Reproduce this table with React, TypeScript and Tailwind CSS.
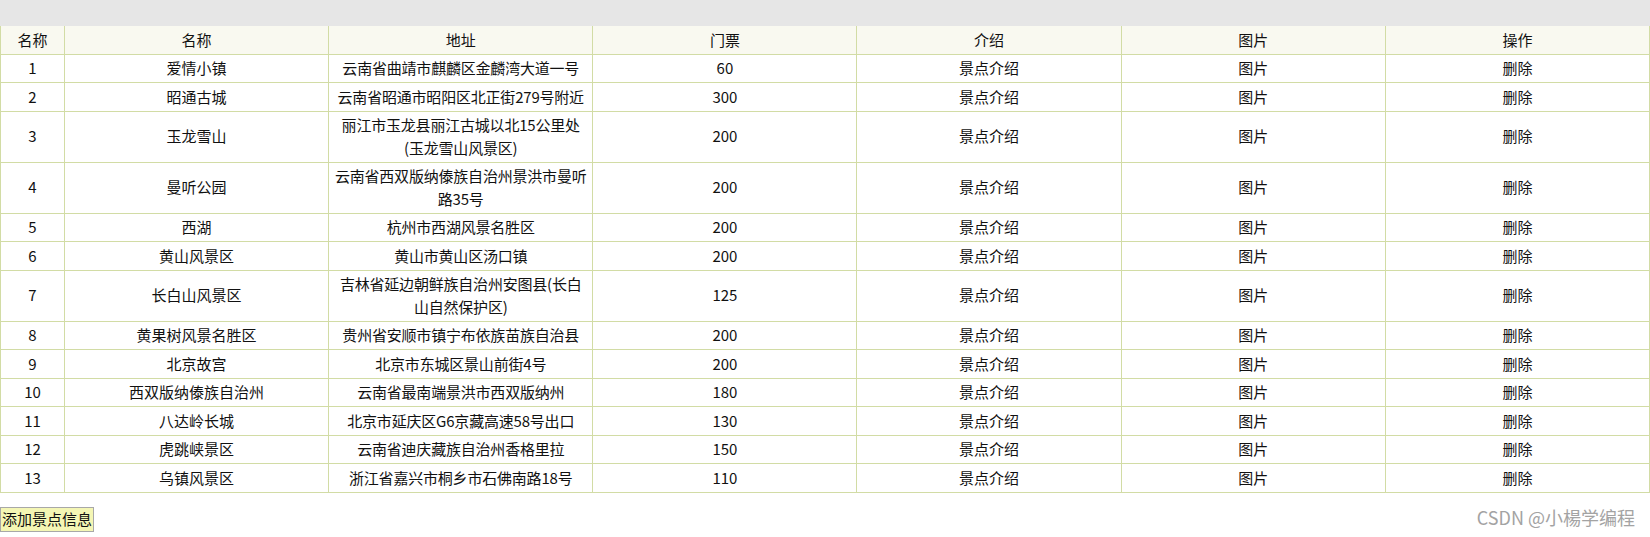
const rows: [string, string, string[], string][] = [
  ["1", "爱情小镇", ["云南省曲靖市麒麟区金麟湾大道一号"], "60"],
  ["2", "昭通古城", ["云南省昭通市昭阳区北正街279号附近"], "300"],
  ["3", "玉龙雪山", ["丽江市玉龙县丽江古城以北15公里处", "(玉龙雪山风景区)"], "200"],
  ["4", "曼听公园", ["云南省西双版纳傣族自治州景洪市曼听", "路35号"], "200"],
  ["5", "西湖", ["杭州市西湖风景名胜区"], "200"],
  ["6", "黄山风景区", ["黄山市黄山区汤口镇"], "200"],
  ["7", "长白山风景区", ["吉林省延边朝鲜族自治州安图县(长白", "山自然保护区)"], "125"],
  ["8", "黄果树风景名胜区", ["贵州省安顺市镇宁布依族苗族自治县"], "200"],
  ["9", "北京故宫", ["北京市东城区景山前街4号"], "200"],
  ["10", "西双版纳傣族自治州", ["云南省最南端景洪市西双版纳州"], "180"],
  ["11", "八达岭长城", ["北京市延庆区G6京藏高速58号出口"], "130"],
  ["12", "虎跳峡景区", ["云南省迪庆藏族自治州香格里拉"], "150"],
  ["13", "乌镇风景区", ["浙江省嘉兴市桐乡市石佛南路18号"], "110"],
];

const headers = ["名称", "名称", "地址", "门票", "介绍", "图片", "操作"];

const cell = "border border-[#d2dca5] text-center align-middle px-[3px] py-[2.5px]";

export default function App() {
  return (
    <div
      className="relative w-[1650px] h-[537px] overflow-hidden bg-white text-[15px] leading-[22.5px] text-[#111]"
      style={{ fontFamily: '"Microsoft YaHei", "Noto Sans CJK SC", sans-serif' }}
    >
      <div className="h-[26px] bg-[#e6e6e6]" />
      <table className="w-full table-fixed border-collapse">
        <colgroup>
          <col className="w-[64px]" />
          <col />
          <col />
          <col />
          <col />
          <col />
          <col />
        </colgroup>
        <thead>
          <tr className="bg-[#f9f9f0]">
            {headers.map((h, i) => (
              <th key={i} className={`${cell} font-normal border-t-0`}>
                {h}
              </th>
            ))}
          </tr>
        </thead>
        <tbody>
          {rows.map((r) => (
            <tr key={r[0]}>
              <td className={cell}>{r[0]}</td>
              <td className={cell}>{r[1]}</td>
              <td className={`${cell} whitespace-nowrap tracking-[-0.2px]`}>
                {r[2].map((line, i) => (
                  <div key={i}>{line}</div>
                ))}
              </td>
              <td className={cell}>{r[3]}</td>
              <td className={cell}>景点介绍</td>
              <td className={cell}>图片</td>
              <td className={cell}>删除</td>
            </tr>
          ))}
        </tbody>
      </table>
      <div className="mt-[14px]">
        <button className="h-[25px] px-[1px] bg-[#f4f6b4] border border-[#a8a8a8] text-[15px] leading-[22px] text-[#111]">
          添加景点信息
        </button>
      </div>
      <div className="absolute right-[15px] bottom-[9px] text-[18px] leading-[22px] text-[#a3a3a3] [text-shadow:0_0_1px_#fff]">
        CSDN @小楊学编程
      </div>
    </div>
  );
}
